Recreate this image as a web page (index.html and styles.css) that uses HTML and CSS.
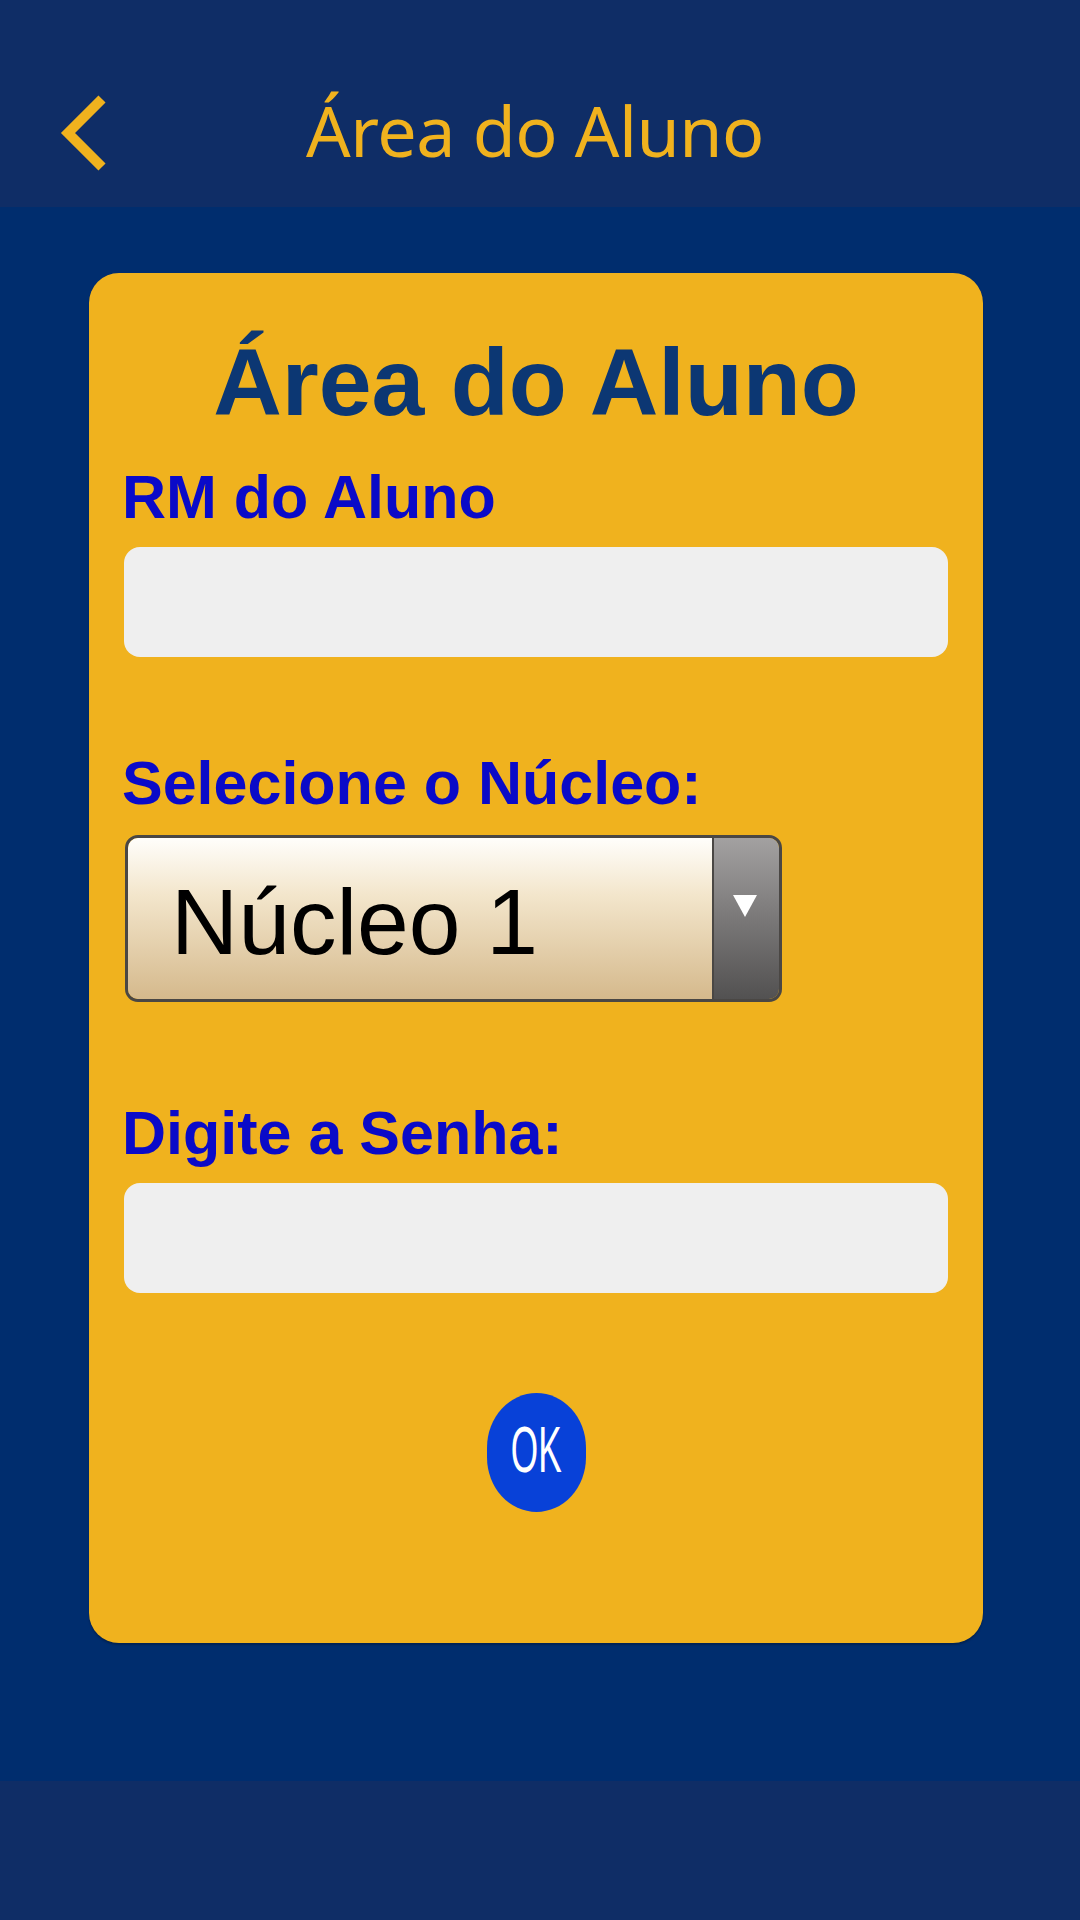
FILE: index.html
```html
<!DOCTYPE html>
<html lang="pt-BR">
<head>
<meta charset="utf-8">
<title>Área do Aluno</title>
<link rel="stylesheet" href="styles.css">
</head>
<body>
  <header class="appbar">
    <button class="back" type="button" aria-label="Voltar">
      <svg class="back-icon" width="50" height="80" viewBox="0 0 50 80">
        <polyline points="43,4 9,38 43,72" fill="none" stroke="#f0b21e" stroke-width="10" stroke-linejoin="miter" stroke-linecap="butt"/>
      </svg>
    </button>
    <h1 class="appbar-title">Área do Aluno</h1>
    <span class="appbar-spacer"></span>
  </header>

  <main class="content">
    <section class="card">
      <h2 class="card-title">Área do Aluno</h2>

      <label class="field-label" for="rm">RM do Aluno</label>
      <input class="text-input" id="rm" type="text">

      <label class="field-label label-select">Selecione o Núcleo:</label>
      <div class="select">
        <span class="select-value">Núcleo 1</span>
        <span class="select-btn">
          <svg class="select-arrow" width="24" height="22" viewBox="0 0 24 22">
            <polygon points="0,0 24,0 12,22" fill="#ffffff"/>
          </svg>
        </span>
      </div>

      <label class="field-label label-pass" for="senha">Digite a Senha:</label>
      <input class="text-input" id="senha" type="password">

      <div class="ok-wrap">
        <button class="ok-btn" type="button"><span class="ok-text">OK</span></button>
      </div>
    </section>
  </main>

  <footer class="bottombar"></footer>
</body>
</html>
```

FILE: styles.css
```css
* { box-sizing: border-box; }

html, body {
  margin: 0;
  padding: 0;
}

body {
  width: 1080px;
  min-height: 1920px;
  background: #002d6e;
  display: flex;
  flex-direction: column;
  font-family: "Liberation Sans", Arial, sans-serif;
}

/* ---------- top app bar ---------- */
.appbar {
  height: 207px;
  background: #0f2d66;
  display: grid;
  grid-template-columns: 1fr auto 1fr;
  align-items: start;
  padding-top: 90px;
}

.back {
  justify-self: start;
  margin: 5px 0 0 59px;
  padding: 0;
  border: none;
  background: none;
  width: 50px;
  height: 80px;
  cursor: pointer;
}

.back-icon { display: block; }

.appbar-title {
  margin: 0 0 0 -10px;
  font-family: "Noto Sans", "Open Sans", sans-serif;
  font-weight: 400;
  font-size: 70px;
  line-height: 80px;
  color: #f0b21e;
  letter-spacing: -0.5px;
}

/* ---------- main content ---------- */
.content {
  flex: 1;
  padding-top: 66px;
}

.card {
  width: 894px;
  margin-left: 89px;
  background: #f0b21e;
  border-radius: 30px;
  padding: 54px 35px 131px 35px;
  display: flex;
  flex-direction: column;
  align-items: flex-start;
  box-shadow: 0 2px 2px rgba(0, 0, 0, 0.25);
}

.card-title {
  align-self: stretch;
  margin: 0;
  text-align: center;
  font-size: 95px;
  line-height: 110px;
  font-weight: 700;
  color: #0c3773;
}

.field-label {
  display: block;
  margin-top: 25px;
  margin-left: -2px;
  font-size: 61px;
  line-height: 70px;
  font-weight: 700;
  color: #0a0ac8;
}

.label-select { margin-top: 91px; }
.label-pass { margin-top: 96px; }

.text-input {
  display: block;
  margin-top: 15px;
  width: 824px;
  height: 110px;
  border: none;
  outline: none;
  border-radius: 16px;
  background: #efefef;
  font-size: 48px;
  padding: 0 24px;
  -webkit-appearance: none;
  appearance: none;
}

/* ---------- select ---------- */
.select {
  margin-top: 17px;
  margin-left: 1px;
  width: 657px;
  height: 167px;
  border: 3px solid #4a4744;
  border-radius: 13px;
  display: flex;
  overflow: hidden;
}

.select-value {
  flex: 1;
  display: flex;
  align-items: center;
  padding: 8px 0 0 43px;
  font-size: 93px;
  line-height: 1;
  color: #000000;
  background: linear-gradient(to bottom, #fffefb 0%, #f3e6cc 35%, #d5b98c 100%);
}

.select-btn {
  width: 67px;
  border-left: 2px solid #4a4744;
  background: linear-gradient(to bottom, #a3a1a1 0%, #7a7878 50%, #525151 100%);
  display: flex;
  justify-content: center;
  align-items: flex-start;
  padding-top: 57px;
}

.select-arrow { display: block; margin-left: -4px; }

/* ---------- OK button ---------- */
.ok-wrap {
  align-self: center;
  margin-top: 100px;
}

.ok-btn {
  display: flex;
  justify-content: center;
  align-items: center;
  width: 99px;
  height: 119px;
  padding: 0 0 6px 0;
  border: none;
  border-radius: 50% / 46%;
  background: #0841d8;
  cursor: pointer;
}

.ok-text {
  display: inline-block;
  font-family: "Liberation Sans", Arial, sans-serif;
  font-weight: 400;
  font-size: 64px;
  line-height: 1;
  color: #ffffff;
  transform: scaleX(0.55);
}

/* ---------- bottom bar ---------- */
.bottombar {
  height: 139px;
  background: #0f2d66;
}
```
